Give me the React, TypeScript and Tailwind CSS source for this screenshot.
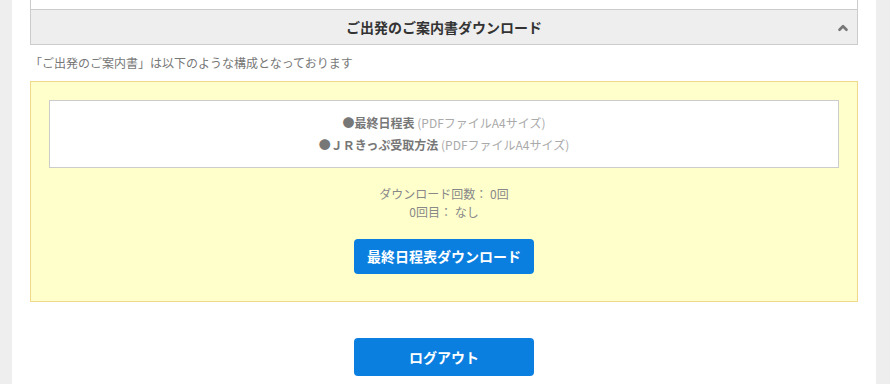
import { ChevronUp } from "lucide-react";

const font = {
  fontFamily: '"Noto Sans CJK JP", "Noto Sans", sans-serif',
};

export default function App() {
  return (
    <div className="flex h-[384px] w-[890px] bg-[#eeeeee] overflow-hidden" style={font}>
      <div className="w-[12px] shrink-0" />
      <div className="w-[864px] shrink-0 bg-white px-[18px]">
        {/* top of previous panel */}
        <div className="h-[9px] border-x border-[#cccccc]" />

        {/* section header */}
        <div className="relative flex h-[36px] items-center justify-center border border-[#cccccc] bg-[#eeeeee]">
          <span className="text-[14px] font-bold text-[#333333]">
            ご出発のご案内書ダウンロード
          </span>
          <ChevronUp
            size={14}
            strokeWidth={4.5}
            className="absolute right-[7px] top-[11px] text-[#777777]"
          />
        </div>

        <p className="mt-[9px] text-[12px] leading-[18px] text-[#777777]">
          「ご出発のご案内書」は以下のような構成となっております
        </p>

        {/* yellow panel */}
        <div className="mt-[9px] h-[221px] border border-[#f0d98a] bg-[#ffffcc] px-[18px] pt-[18px]">
          <div className="flex h-[68px] flex-col items-center justify-center border border-[#cccccc] bg-white text-[12px] leading-[22px]">
            <p>
              <span className="font-bold text-[#777777]">●最終日程表</span>
              <span className="text-[#aaaaaa]"> (PDFファイルA4サイズ)</span>
            </p>
            <p>
              <span className="font-bold text-[#777777]">●ＪＲきっぷ受取方法</span>
              <span className="text-[#aaaaaa]"> (PDFファイルA4サイズ)</span>
            </p>
          </div>

          <div className="mt-[17px] flex flex-col items-center text-[12px] leading-[18px] text-[#888888]">
            <p>ダウンロード回数： 0回</p>
            <p>0回目： なし</p>
          </div>

          <div className="mt-[18px] flex justify-center">
            <button className="flex h-[35px] w-[180px] items-center justify-center rounded-[4px] bg-[#0b7fe0] text-[14px] font-bold text-white">
              最終日程表ダウンロード
            </button>
          </div>
        </div>

        <div className="mt-[36px] flex justify-center">
          <button className="flex h-[38px] w-[180px] items-center justify-center rounded-[4px] bg-[#0b7fe0] text-[14px] font-bold text-white">
            ログアウト
          </button>
        </div>
      </div>
      <div className="flex-1" />
    </div>
  );
}
